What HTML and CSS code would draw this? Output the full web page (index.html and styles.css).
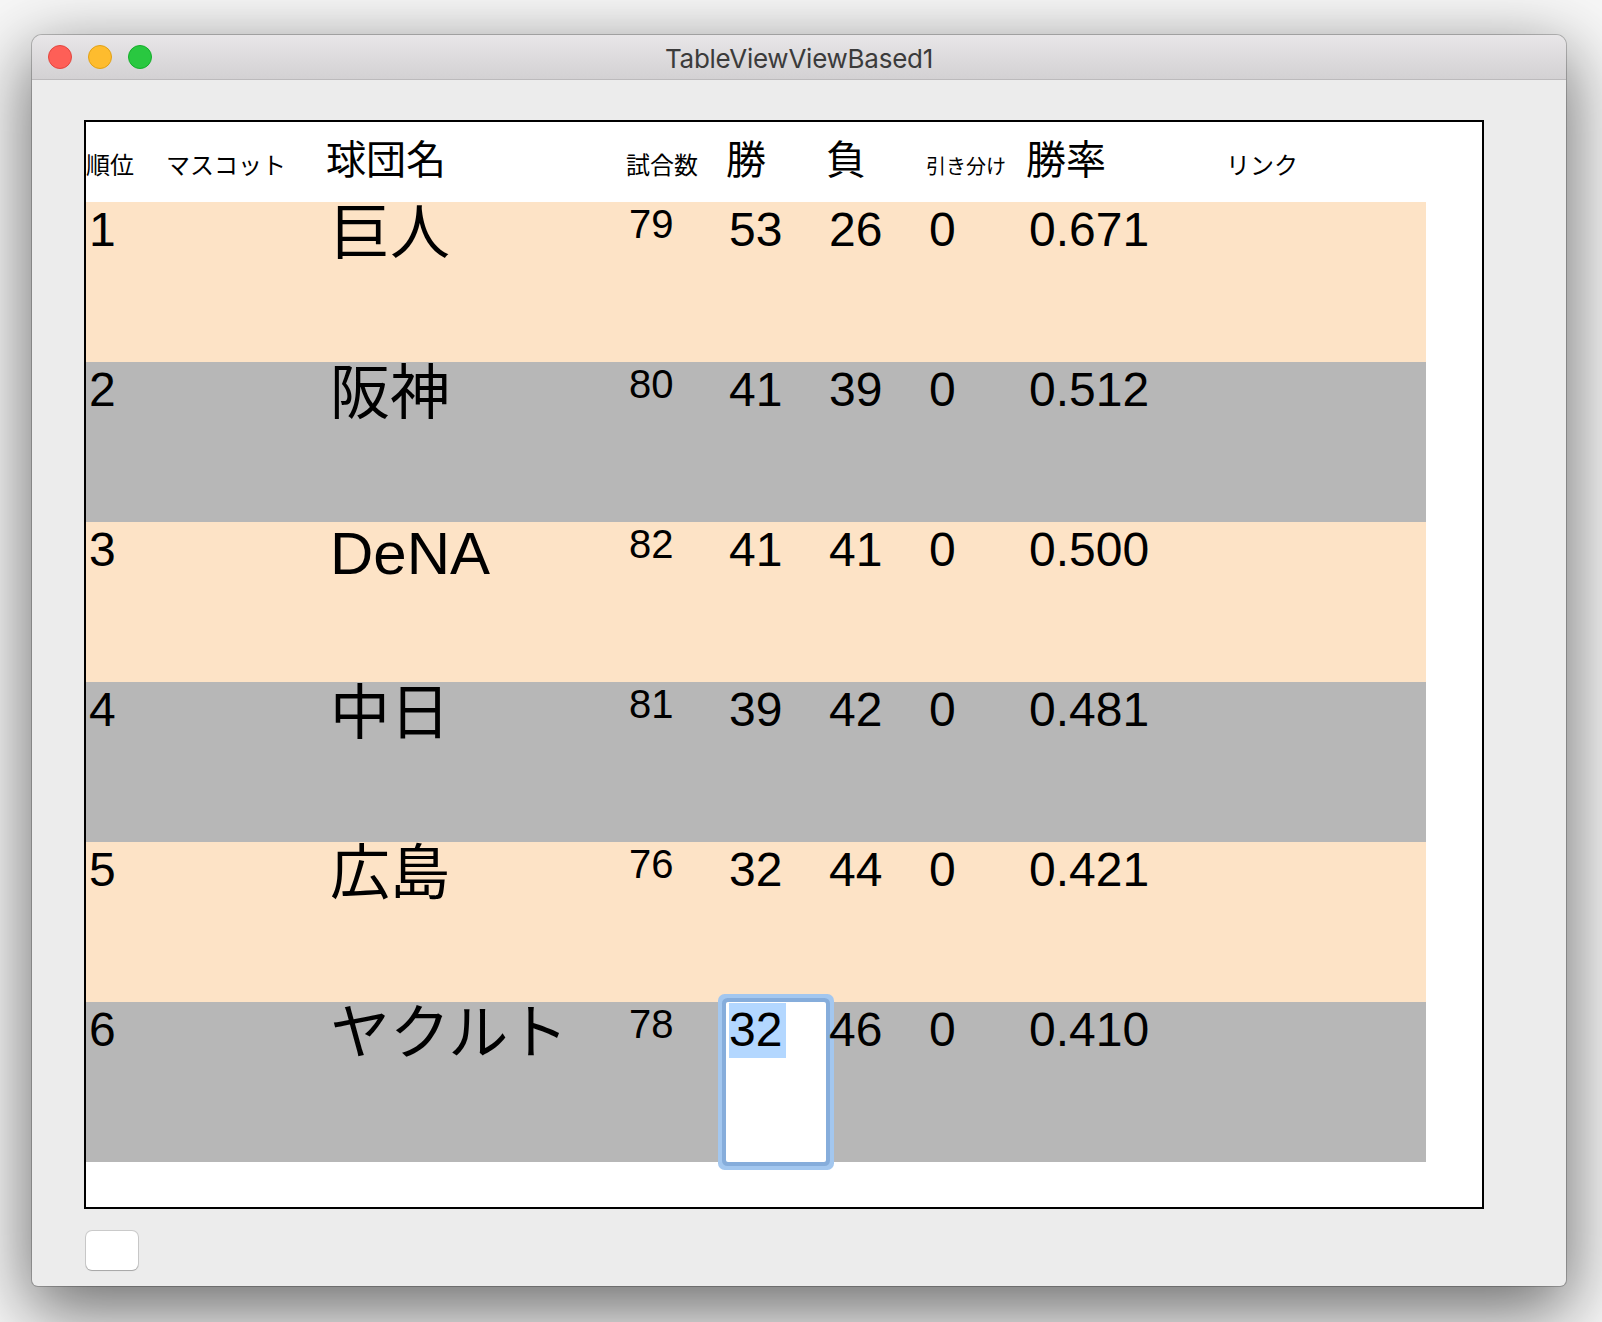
FILE: index.html
```html
<!DOCTYPE html>
<html lang="ja">
<head>
<meta charset="utf-8">
<title>TableViewViewBased1</title>
<link rel="stylesheet" href="styles.css">
</head>
<body>
<div class="window">
  <div class="titlebar">
    <div class="lights">
      <span class="light red"></span>
      <span class="light yellow"></span>
      <span class="light green"></span>
    </div>
    <div class="title">TableViewViewBased1</div>
    <div class="spacer"></div>
  </div>
  <div class="content">
    <div class="table">
      <div class="thead">
        <div class="hcell w80 h24">順位</div>
        <div class="hcell w160 h24">マスコット</div>
        <div class="hcell w300 h40">球団名</div>
        <div class="hcell w100 h24">試合数</div>
        <div class="hcell w100 h40">勝</div>
        <div class="hcell w100 h40">負</div>
        <div class="hcell w100 h20">引き分け</div>
        <div class="hcell w200 h40">勝率</div>
        <div class="hcell w200 h24">リンク</div>
      </div>
      <div class="tbody">
        <div class="trow peach">
          <div class="cell w80 n48">1</div>
          <div class="cell w160"></div>
          <div class="cell w300 team">巨人</div>
          <div class="cell w100 n40">79</div>
          <div class="cell w100 n48">53</div>
          <div class="cell w100 n48">26</div>
          <div class="cell w100 n48">0</div>
          <div class="cell w200 n48">0.671</div>
          <div class="cell w200"></div>
        </div>
        <div class="trow gray">
          <div class="cell w80 n48">2</div>
          <div class="cell w160"></div>
          <div class="cell w300 team">阪神</div>
          <div class="cell w100 n40">80</div>
          <div class="cell w100 n48">41</div>
          <div class="cell w100 n48">39</div>
          <div class="cell w100 n48">0</div>
          <div class="cell w200 n48">0.512</div>
          <div class="cell w200"></div>
        </div>
        <div class="trow peach">
          <div class="cell w80 n48">3</div>
          <div class="cell w160"></div>
          <div class="cell w300 team">DeNA</div>
          <div class="cell w100 n40">82</div>
          <div class="cell w100 n48">41</div>
          <div class="cell w100 n48">41</div>
          <div class="cell w100 n48">0</div>
          <div class="cell w200 n48">0.500</div>
          <div class="cell w200"></div>
        </div>
        <div class="trow gray">
          <div class="cell w80 n48">4</div>
          <div class="cell w160"></div>
          <div class="cell w300 team">中日</div>
          <div class="cell w100 n40">81</div>
          <div class="cell w100 n48">39</div>
          <div class="cell w100 n48">42</div>
          <div class="cell w100 n48">0</div>
          <div class="cell w200 n48">0.481</div>
          <div class="cell w200"></div>
        </div>
        <div class="trow peach">
          <div class="cell w80 n48">5</div>
          <div class="cell w160"></div>
          <div class="cell w300 team">広島</div>
          <div class="cell w100 n40">76</div>
          <div class="cell w100 n48">32</div>
          <div class="cell w100 n48">44</div>
          <div class="cell w100 n48">0</div>
          <div class="cell w200 n48">0.421</div>
          <div class="cell w200"></div>
        </div>
        <div class="trow gray">
          <div class="cell w80 n48">6</div>
          <div class="cell w160"></div>
          <div class="cell w300 team">ヤクルト</div>
          <div class="cell w100 n40">78</div>
          <div class="cell w100 n48 editing"><span class="selected">32</span></div>
          <div class="cell w100 n48">46</div>
          <div class="cell w100 n48">0</div>
          <div class="cell w200 n48">0.410</div>
          <div class="cell w200"></div>
        </div>
      </div>
    </div>
    <div class="button"></div>
  </div>
</div>
</body>
</html>
```

FILE: styles.css
```css
html, body {
  margin: 0;
  padding: 0;
}

body {
  width: 1602px;
  height: 1322px;
  overflow: hidden;
  background: #f7f7f7;
  font-family: "Liberation Sans", "Noto Sans CJK JP", sans-serif;
}

.window {
  margin: 35px 0 0 32px;
  width: 1534px;
  height: 1251px;
  background: #ececec;
  border-radius: 10px 10px 6px 6px;
  box-shadow: 0 0 0 1px rgba(0, 0, 0, 0.22), 0 22px 70px 4px rgba(0, 0, 0, 0.56);
  overflow: hidden;
}

.titlebar {
  height: 44px;
  border-bottom: 1px solid #bcbabc;
  background: linear-gradient(#e8e6e8, #d3d1d3);
  display: grid;
  grid-template-columns: 1fr auto 1fr;
  align-items: center;
}

.lights {
  display: flex;
  gap: 16px;
  padding-left: 16px;
}

.light {
  width: 24px;
  height: 24px;
  border-radius: 50%;
  box-sizing: border-box;
}

.red { background: #fe5f57; border: 1px solid #e2463f; }
.yellow { background: #febc2e; border: 1px solid #e1a116; }
.green { background: #29c840; border: 1px solid #14ae2a; }

.title {
  font-family: Inter, "Noto Sans", sans-serif;
  font-size: 26px;
  color: #3b3b3b;
  padding-top: 3px;
  letter-spacing: -0.25px;
}

.content {
  padding: 40px 0 0 52px;
}

.table {
  width: 1396px;
  height: 1085px;
  border: 2px solid #000;
  background: #fff;
}

.thead {
  display: flex;
  align-items: baseline;
  height: 80px;
  box-sizing: border-box;
  padding-top: 15px;
  font-family: "Noto Sans CJK JP", sans-serif;
  color: #000;
}

.hcell {
  line-height: 1;
  flex: none;
}

.h20 { font-size: 20px; }
.h24 { font-size: 24px; }
.h40 { font-size: 40px; }

.w80 { width: 80px; }
.w100 { width: 100px; }
.w160 { width: 160px; }
.w200 { width: 200px; }
.w300 { width: 300px; }

.tbody {
  width: 1340px;
}

.trow {
  display: flex;
  height: 160px;
}

.peach { background: #fde3c6; }
.gray { background: #b7b7b7; }

.cell {
  flex: none;
  box-sizing: border-box;
  padding-left: 3px;
  color: #000;
}

.n48 {
  font-size: 48px;
}

.n40 {
  font-size: 40px;
}

.team {
  font-size: 60px;
  line-height: 1;
  padding-top: 2px;
  padding-left: 4px;
}

.editing {
  background: #fff;
  border-radius: 2px;
  box-shadow: 0 0 0 4px #86addb, 0 0 0 8px #a3c7ef;
}

.selected {
  background: #b3d7ff;
  padding-right: 4px;
  padding-bottom: 2px;
}

.button {
  margin-top: 22px;
  margin-left: 2px;
  width: 52px;
  height: 39px;
  background: #fff;
  border-radius: 6px;
  box-shadow: 0 0 0 1px rgba(0, 0, 0, 0.14), 0 1px 1px rgba(0, 0, 0, 0.18);
}
```
